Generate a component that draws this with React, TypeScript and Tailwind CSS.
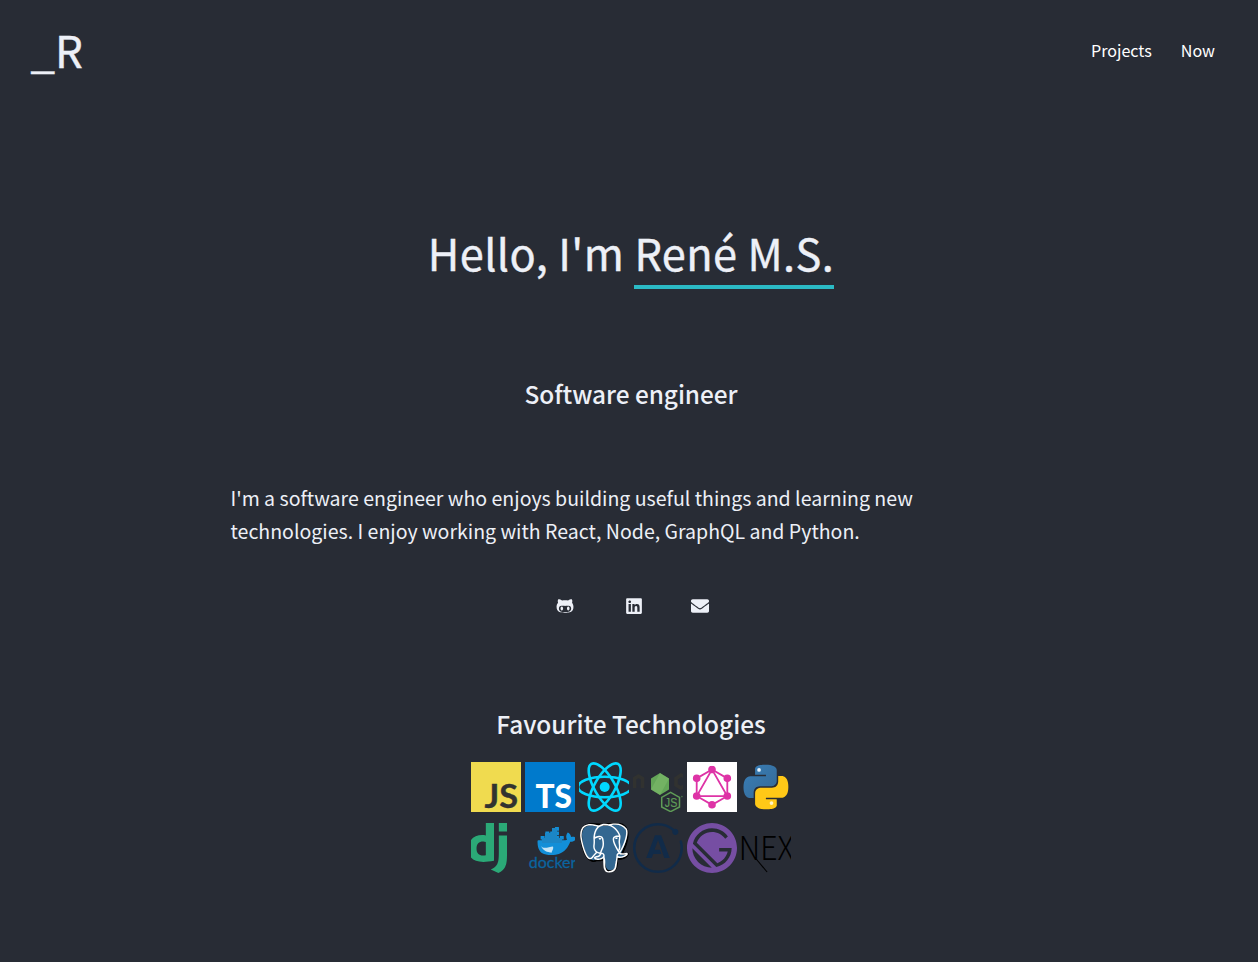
import type { ReactNode } from "react";
import {
  SiApollographql,
  SiDjango,
  SiDocker,
  SiGatsby,
  SiGraphql,
  SiPostgresql,
} from "react-icons/si";
import { FaEnvelope, FaGithubAlt, FaLinkedin } from "react-icons/fa";

function Logo({ children, className = "" }: { children: ReactNode; className?: string }) {
  return (
    <li className={`size-[50px] overflow-hidden ${className}`}>
      <svg viewBox="0 0 50 50" width="50" height="50">
        {children}
      </svg>
    </li>
  );
}

function Technologies() {
  return (
    <ul className="grid grid-cols-[repeat(6,50px)] justify-center gap-x-1 gap-y-[11px]">
      <Logo className="bg-[#f0db4f]">
        <text x="13.5" y="45.5" fontSize="32" fontWeight="700" fill="#323330" stroke="#323330" strokeWidth=".4" fontFamily="Lato, sans-serif" textLength="33.5" lengthAdjust="spacingAndGlyphs">JS</text>
      </Logo>
      <Logo className="bg-[#007acc]">
        <text x="10.5" y="45.5" fontSize="32" fontWeight="900" fill="#fff" fontFamily="Lato, sans-serif" textLength="36.5" lengthAdjust="spacingAndGlyphs">TS</text>
      </Logo>
      <Logo>
        <g transform="translate(25.7 25)">
          <circle r="5" fill="#00d8ff" />
          <g fill="none" stroke="#00d8ff" strokeWidth="2.6">
            <ellipse rx="26.6" ry="10.2" />
            <ellipse rx="26.6" ry="10.2" transform="rotate(60)" />
            <ellipse rx="26.6" ry="10.2" transform="rotate(120)" />
          </g>
        </g>
      </Logo>
      <Logo>
        <path d="M1.5 26v-9.5l4-2.5 4 2.5V26M51 14.5l-3-1.5-5 3.5V23l5 3 3-2" fill="none" stroke="#313230" strokeWidth="3.6" />
        <path d="M27 11l9 5.5v11L27 33l-9-5.5v-11z" fill="#64a658" />
        <path d="M27 11l9 5.5-9 16.5-9-5.5z" fill="#84c270" fillOpacity=".45" />
        <path d="M37.6 30.4l8.9 5v9.6l-8.9 4.6-8.9-4.6v-9.6z" fill="none" stroke="#5f9c57" strokeWidth="1.5" />
        <text x="31.8" y="45" fontSize="13" fill="#5f9c57" stroke="#5f9c57" strokeWidth=".2" fontFamily="'Liberation Sans', sans-serif" textLength="12.5" lengthAdjust="spacingAndGlyphs">JS</text>
        <circle cx="48.9" cy="34.6" r=".8" fill="#4f7d4c" />
      </Logo>
      <Logo className="bg-white">
        <SiGraphql x="3.5" y="3.7" size="43" color="#de33a6" />
      </Logo>
      <Logo>
        <defs>
          <linearGradient id="py-blue" x1="0" y1="0" x2="1" y2="1">
            <stop offset="0" stopColor="#387eb8" />
            <stop offset="1" stopColor="#366994" />
          </linearGradient>
        </defs>
        <g transform="translate(2.6 2.7) scale(1.86)">
          <path fill="url(#py-blue)" d="M14.25.18l.9.2.73.26.59.3.45.32.34.34.25.34.16.33.1.3.04.26.02.2-.01.13V8.5l-.05.63-.13.55-.21.46-.26.38-.3.31-.33.25-.35.19-.35.14-.33.1-.3.07-.26.04-.21.02H8.77l-.69.05-.59.14-.5.22-.41.27-.33.32-.27.35-.2.36-.15.37-.1.35-.07.32-.04.27-.02.21v3.06H3.17l-.21-.03-.28-.07-.32-.12-.35-.18-.36-.26-.36-.36-.35-.46-.32-.59-.28-.73-.21-.88-.14-1.05-.05-1.23.06-1.22.16-1.04.24-.87.32-.71.36-.57.4-.44.42-.33.42-.24.4-.16.36-.1.32-.05.24-.01h.16l.06.01h8.16v-.83H6.18l-.01-2.75-.02-.37.05-.34.11-.31.17-.28.25-.26.31-.23.38-.2.44-.18.51-.15.58-.12.64-.1.71-.06.77-.04.84-.02 1.27.05z" />
          <path fill="#ffc817" d="M21.04 6.11l.28.06.32.12.35.18.36.27.36.35.35.47.32.59.28.73.21.88.14 1.04.05 1.23-.06 1.23-.16 1.04-.24.86-.32.71-.36.57-.4.45-.42.33-.42.24-.4.16-.36.09-.32.05-.24.02-.16-.01h-8.22v.82h5.84l.01 2.76.02.36-.05.34-.11.31-.17.29-.25.25-.31.24-.38.2-.44.17-.51.15-.58.13-.64.09-.71.07-.77.04-.84.01-1.27-.04-1.07-.14-.9-.2-.73-.25-.59-.3-.45-.33-.34-.34-.25-.34-.16-.33-.1-.3-.04-.25-.02-.2.01-.13v-5.34l.05-.64.13-.54.21-.46.26-.38.3-.32.33-.24.35-.2.35-.14.33-.1.3-.06.26-.04.21-.02.13-.01h5.84l.69-.05.59-.14.5-.21.41-.28.33-.32.27-.35.2-.36.15-.36.1-.35.07-.32.04-.28.02-.21V6.07h2.09z" />
          <circle cx="8.3" cy="2.8" r="1" fill="#e8f3fb" />
          <circle cx="15" cy="20.6" r="1" fill="#fff4c9" />
        </g>
      </Logo>
      <Logo>
        <SiDjango x="-8.4" y="0" size="50" color="#2ba977" />
      </Logo>
      <Logo>
        <SiDocker x="12.3" y="-1.4" size="39" color="#128fd8" />
        <path d="M17 15h20v5H17zM20 10h12v6H20zM27 5h5v6h-5z" fill="#1b86c6" />
        <path d="M16 23c2 3.500 8 1 12 .5 1 3-2 5-1 6-5 0-9-2-11-6.500z" fill="#c5e4f5" />
        <text x="3.800" y="44.800" fontSize="15.800" fill="#0b649f" stroke="#0b649f" strokeWidth=".3" fontFamily="Lato, sans-serif" textLength="47.500" lengthAdjust="spacingAndGlyphs">docker</text>
      </Logo>
      <Logo>
        <path d="M2 12C2 4 7 1 14 1c5 0 8 1 11 1C33 0 40 0 44 2c5 3 5 10 4 15-1 6-4 11-5 14l6 0c-2 4-6 5-11 5 0 6 0 12-6 12-5 1-7-3-7-12-3 1-5 2-7 1-3 2-7 1-10-3C4 28 2 18 2 12z" fill="#336791" stroke="#000" strokeWidth="2" strokeLinejoin="round" />
        <SiPostgresql x=".3" y=".3" size="49.4" color="#fff" />
      </Logo>
      <Logo>
        <SiApollographql size="50" color="#112b49" />
      </Logo>
      <Logo>
        <SiGatsby size="50" color="#764ea3" />
      </Logo>
      <Logo>
        <text x="-2.2" y="37" fontSize="32.5" fill="#000" fontFamily="'Noto Sans CJK JP', sans-serif" fontWeight="200" textLength="55" lengthAdjust="spacingAndGlyphs">NEX</text>
        <path d="M15.200 36l10.900 13" stroke="#000" strokeWidth="1.1" />
      </Logo>
    </ul>
  );
}

export default function App() {
  return (
    <div className="h-[962px] overflow-hidden bg-[#282c35] font-['Noto_Sans_CJK_JP','Noto_Sans',sans-serif] text-[#edf0f7]">
      <header className="flex h-[98px] items-center justify-between pr-[43px] pl-[30.5px]">
        <a className="text-[43.9px] leading-[98px] [-webkit-text-stroke:0.4px]">_R</a>
        <nav className="flex gap-[29px] pt-0.5 text-[16.1px] leading-6 text-white">
          <a>Projects</a>
          <a>Now</a>
        </nav>
      </header>
      <main className="ml-[229px] w-[804px]">
        <h1 className="pt-[121px] text-center text-[43.3px] leading-[66px] tracking-[0.4px] whitespace-nowrap [-webkit-text-stroke:0.4px]">
          Hello, I'm <span className="inline-block border-b-4 border-[#2bbac5]">René M.S.</span>
        </h1>
        <h2 className="mt-[85px] text-center text-[24.4px] leading-10 font-medium tracking-[-0.05px]">Software engineer</h2>
        <p className="mt-[67px] w-[710px] pl-[1.5px] text-[19.55px] leading-[33px]">
          I'm a software engineer who enjoys building useful things and learning new technologies. I enjoy
          working with React, Node, GraphQL and Python.
        </p>
        <div className="mt-[50px] flex h-[18px] items-center gap-[51px] pl-[327px] text-[18px]">
          <FaGithubAlt />
          <FaLinkedin />
          <FaEnvelope className="-ml-[3px]" />
        </div>
        <h2 className="mt-[89px] mb-[18px] text-center text-[24.4px] leading-10 font-medium">Favourite Technologies</h2>
        <Technologies />
      </main>
    </div>
  );
}
